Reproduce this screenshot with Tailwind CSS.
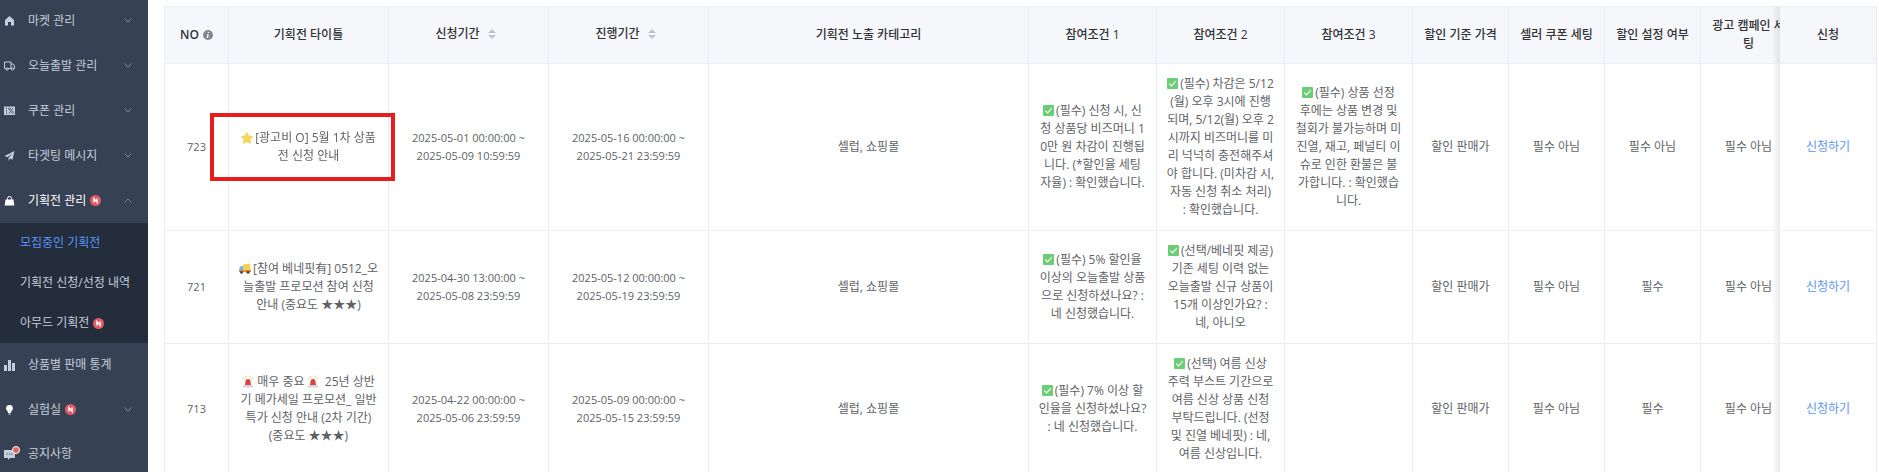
<!DOCTYPE html>
<html lang="ko">
<head>
    <meta charset="UTF-8">
    <meta name="viewport" content="width=device-width, initial-scale=1.0">
    <title>모집중인 기획전</title>
    <script src="https://cdn.jsdelivr.net/npm/@tailwindcss/browser@4"></script>
</head>
<body class="flex h-screen overflow-hidden bg-white font-['Open_Sans','Noto_Sans_CJK_KR',sans-serif] text-[12px] leading-[18px] text-[#606266]">

    <!-- Shared icons -->
    <svg class="hidden">
        <symbol id="chevron" viewBox="0 0 8 5"><path d="M.5 .5 4 4 7.5 .5" fill="none" stroke="#7d8898" stroke-width="1"/></symbol>
        <symbol id="new" viewBox="0 0 11 11"><circle cx="5.5" cy="5.5" r="5.5" fill="#e25a64"/><path d="M3.9 7.6V3.6L7.1 7.4V3.4" fill="none" stroke="#fff" stroke-width="1.4"/></symbol>
        <symbol id="check" viewBox="0 0 11 11"><rect width="11" height="11" rx="1" fill="#6bce76"/><path d="M2.4 5.6 4.6 7.8 8.8 3.2" fill="none" stroke="#fff" stroke-width="1.2"/></symbol>
        <symbol id="siren" viewBox="0 0 12 12"><path d="M1 1.500 2.600 3.500M11 1.500 9.400 3.500M3.500 0 4.300 2M8.500 0 7.700 2" stroke="#f0c75a" stroke-width=".9"/><path d="M3 9 3.500 5.500a2.500 2.500 0 0 1 5 0L9 9z" fill="#dc4440"/><path d="M1.500 9H10.500L11 11.500H1z" fill="#d3d6db"/></symbol>
        <symbol id="sort" viewBox="0 0 8 10"><path d="M4 0 8 4H0zM4 10 0 6H8z" fill="#c0c4cc"/></symbol>
    </svg>

    <!-- Sidebar -->
    <nav class="w-[148px] shrink-0 overflow-hidden bg-[#364153] text-[#c5cedb]">
        <ul class="-mt-0.5">
            <li>
                <button type="button" class="flex h-[45px] w-full items-center pr-4 pl-1">
                    <svg class="mr-[13px] size-[11px]" viewBox="0 0 11 11"><path d="M5.500 1 10 5V10.500H7V7H4v3.500H1V5z" fill="currentColor"/></svg>
                    마켓 관리
                    <svg class="ml-auto h-[5px] w-2"><use href="#chevron"/></svg>
                </button>
            </li>
            <li>
                <button type="button" class="flex h-[45px] w-full items-center pr-4 pl-1">
                    <svg class="mr-[13px] size-[11px]" viewBox="0 0 11 11" fill="none" stroke="currentColor" stroke-width="1"><path d="M.5 2H7V8.500H.5zM7 4H9.300L10.500 6V8.500H7"/><circle cx="3" cy="9" r="1.200" fill="#364153"/><circle cx="8.500" cy="9" r="1.200" fill="#364153"/></svg>
                    오늘출발 관리
                    <svg class="ml-auto h-[5px] w-2"><use href="#chevron"/></svg>
                </button>
            </li>
            <li>
                <button type="button" class="flex h-[45px] w-full items-center pr-4 pl-1">
                    <svg class="mr-[13px] size-[11px]" viewBox="0 0 11 11"><path d="M0 1.500H11V10H0z" fill="currentColor"/><path d="M2.500 2.500V4M2.500 5V6.500M2.500 7.500V9M5 8.500 9 3" stroke="#364153" stroke-width=".9"/><circle cx="5.500" cy="4" r="1" fill="none" stroke="#364153" stroke-width=".7"/><circle cx="8.700" cy="7.500" r="1" fill="none" stroke="#364153" stroke-width=".7"/></svg>
                    쿠폰 관리
                    <svg class="ml-auto h-[5px] w-2"><use href="#chevron"/></svg>
                </button>
            </li>
            <li>
                <button type="button" class="flex h-[45px] w-full items-center pr-4 pl-1">
                    <svg class="mr-[13px] size-[11px]" viewBox="0 0 11 11"><path d="M10.500 1 .5 6 3.300 7.300 8.500 3.300 4.500 7.800V10.800L6 8.600 8.500 9.700z" fill="currentColor"/></svg>
                    타겟팅 메시지
                    <svg class="ml-auto h-[5px] w-2"><use href="#chevron"/></svg>
                </button>
            </li>
            <li>
                <button type="button" class="flex h-[45px] w-full items-center pr-4 pl-1 text-white">
                    <svg class="mr-[13px] size-[11px]" viewBox="0 0 11 11"><path d="M1.500 4.500H9.500L10.300 10.500H.7z" fill="currentColor"/><path d="M3.500 5.500V3.500a2 2 0 0 1 4 0V5.500" fill="none" stroke="currentColor" stroke-width="1"/></svg>
                    기획전 관리
                    <svg class="ml-1 size-[11px]"><use href="#new"/></svg>
                    <svg class="ml-auto h-[5px] w-2 rotate-180"><use href="#chevron"/></svg>
                </button>
                <ul class="bg-[#242d3c]">
                    <li><a href="#" class="flex h-10 items-center pl-5 text-[#5b95f9]">모집중인 기획전</a></li>
                    <li><a href="#" class="flex h-10 items-center pl-5 whitespace-nowrap">기획전 신청/선정 내역</a></li>
                    <li><a href="#" class="flex h-10 items-center pl-5">아무드 기획전<svg class="ml-1 size-[11px]"><use href="#new"/></svg></a></li>
                </ul>
            </li>
            <li>
                <a href="#" class="flex h-11 items-center pr-4 pl-1">
                    <svg class="mr-[13px] size-[11px]" viewBox="0 0 11 11"><path d="M0 5H3V11H0zM4 0H7V11H4zM8 3H11V11H8z" fill="currentColor"/></svg>
                    상품별 판매 통계
                </a>
            </li>
            <li>
                <button type="button" class="flex h-[45px] w-full items-center pr-4 pl-1">
                    <svg class="mr-[13px] size-[11px]" viewBox="0 0 11 11"><path d="M5.500 1a3.400 3.400 0 0 1 3.400 3.400C8.900 6.500 7 7 6.800 9H4.200C4 7 2.100 6.500 2.100 4.400A3.400 3.400 0 0 1 5.500 1zM4.500 9.500H6.500V10.500H4.500z" fill="#fff"/></svg>
                    실험실
                    <svg class="ml-1 size-[11px]"><use href="#new"/></svg>
                    <svg class="ml-auto h-[5px] w-2"><use href="#chevron"/></svg>
                </button>
            </li>
            <li>
                <a href="#" class="flex h-11 items-center pr-4 pl-1">
                    <svg class="mr-[13px] size-[11px] overflow-visible" viewBox="0 0 11 11"><path d="M0 1H11V9H6L4.500 11 4 9H0z" fill="currentColor"/><path d="M2.500 5H3.700M5 5H6.200M7.500 5H8.700" stroke="#364153" stroke-width="1.200"/><circle cx="12" cy="1" r="3.500" fill="#e0645f" stroke="#fff" stroke-width="1"/></svg>
                    공지사항
                </a>
            </li>
        </ul>
    </nav>

    <!-- Promotion list -->
    <main class="min-w-0 flex-1 pt-1.5 pr-0.5 pl-4">
        <div class="overflow-x-hidden border-x border-t border-[#ebeef5]">
            <table class="w-full min-w-[1728px] table-fixed border-separate border-spacing-0 text-center whitespace-nowrap [&_td]:border-r [&_td]:border-b [&_td]:border-[#ebeef5] [&_td]:py-[11px] [&_th]:border-r [&_th]:border-b [&_th]:border-[#ebeef5] [&_th]:bg-[#f5f7fb]">
                <colgroup>
                    <col class="w-16">
                    <col class="w-40">
                    <col class="w-40">
                    <col class="w-40">
                    <col>
                    <col class="w-32">
                    <col class="w-32">
                    <col class="w-32">
                    <col class="w-24">
                    <col class="w-24">
                    <col class="w-24">
                    <col class="w-24">
                    <col class="w-24">
                </colgroup>
                <thead class="text-[#303133]">
                    <tr>
                        <th class="py-2.5 font-medium">
                            <span class="flex items-center justify-center gap-1 font-semibold">NO
                                <svg class="size-[10px]" viewBox="0 0 10 10"><circle cx="5" cy="5" r="5" fill="#85888e"/><path d="M5.500 2 5.300 3M5 4.200 4.500 8" stroke="#fff" stroke-width="1.300"/></svg>
                            </span>
                        </th>
                        <th class="py-2.5 font-medium">기획전 타이틀</th>
                        <th class="pr-1.5 pb-0.5 font-medium"><span class="flex items-center justify-center gap-2">신청기간 <svg class="h-2.5 w-2"><use href="#sort"/></svg></span></th>
                        <th class="pr-1.5 pb-0.5 font-medium"><span class="flex items-center justify-center gap-2">진행기간 <svg class="h-2.5 w-2"><use href="#sort"/></svg></span></th>
                        <th class="py-2.5 font-medium">기획전 노출 카테고리</th>
                        <th class="py-2.5 font-medium">참여조건 1</th>
                        <th class="py-2.5 font-medium">참여조건 2</th>
                        <th class="py-2.5 font-medium">참여조건 3</th>
                        <th class="py-2.5 font-medium">할인 기준 가격</th>
                        <th class="py-2.5 font-medium">셀러 쿠폰 세팅</th>
                        <th class="py-2.5 font-medium">할인 설정 여부</th>
                        <th class="py-2.5 font-medium">광고 캠페인 세<br>팅</th>
                        <th class="sticky right-0 border-r-0! py-2.5 font-medium before:absolute before:inset-y-0 before:right-full before:w-2 before:bg-linear-to-l before:from-black/8 before:to-transparent">신청</th>
                    </tr>
                </thead>
                <tbody>
                    <tr>
                        <td class="text-[11px]">723</td>
                        <td class="relative">
                            <svg class="mr-0.5 inline size-3 align-[-2px]" viewBox="0 0 11 11"><path d="M5.500 .3 7.200 3.500 10.900 4.200 8.300 6.900 8.800 10.600 5.500 9 2.200 10.600 2.700 6.900 .1 4.200 3.800 3.500z" fill="#f3d65c" stroke="#f3d65c" stroke-width=".6" stroke-linejoin="round"/></svg>[광고비 O] 5월 1차 상품<br>전 신청 안내
                            <!-- Highlight frame -->
                            <div class="absolute top-[49px] -left-[19px] z-10 h-[68px] w-[185px] border-4 border-[#e81c1c]"></div>
                        </td>
                        <td class="text-[11px]">2025-05-01 00:00:00 ~<br>2025-05-09 10:59:59</td>
                        <td class="text-[11px]">2025-05-16 00:00:00 ~<br>2025-05-21 23:59:59</td>
                        <td>셀럽, 쇼핑몰</td>
                        <td><svg class="mr-0.5 inline size-[11px] align-[-1px]"><use href="#check"/></svg>(필수) 신청 시, 신<br>청 상품당 비즈머니 1<br>0만 원 차감이 진행됩<br>니다. (*할인율 세팅<br>자율) : 확인했습니다.</td>
                        <td><svg class="mr-0.5 inline size-[11px] align-[-1px]"><use href="#check"/></svg>(필수) 차감은 5/12<br>(월) 오후 3시에 진행<br>되며, 5/12(월) 오후 2<br>시까지 비즈머니를 미<br>리 넉넉히 충전해주셔<br>야 합니다. (미차감 시,<br>자동 신청 취소 처리)<br>: 확인했습니다.</td>
                        <td><svg class="mr-0.5 inline size-[11px] align-[-1px]"><use href="#check"/></svg>(필수) 상품 선정<br>후에는 상품 변경 및<br>철회가 불가능하며 미<br>진열, 재고, 페널티 이<br>슈로 인한 환불은 불<br>가합니다. : 확인했습<br>니다.</td>
                        <td>할인 판매가</td>
                        <td>필수 아님</td>
                        <td>필수 아님</td>
                        <td>필수 아님</td>
                        <td class="sticky right-0 border-r-0! bg-white before:absolute before:inset-y-0 before:right-full before:w-2 before:bg-linear-to-l before:from-black/8 before:to-transparent"><a href="#" class="text-[#5b95f9]">신청하기</a></td>
                    </tr>
                    <tr>
                        <td class="text-[11px]">721</td>
                        <td>
                            <svg class="mr-0.5 inline h-[11px] w-3 align-[-1px]" viewBox="0 0 12 11"><path d="M4 1.500 11 .5 11.800 7H4z" fill="#f3cf55"/><path d="M0 7 1 3.500 4 3V8H0z" fill="#6fb4e8"/><path d="M0 7H12V9H0z" fill="#e8893a"/><circle cx="2.500" cy="9.300" r="1.500" fill="#4b4b52"/><circle cx="9" cy="9.300" r="1.500" fill="#4b4b52"/></svg>[참여 베네핏有] 0512_오<br>늘출발 프로모션 참여 신청<br>안내 (중요도 ★★★)
                        </td>
                        <td class="text-[11px]">2025-04-30 13:00:00 ~<br>2025-05-08 23:59:59</td>
                        <td class="text-[11px]">2025-05-12 00:00:00 ~<br>2025-05-19 23:59:59</td>
                        <td>셀럽, 쇼핑몰</td>
                        <td><svg class="mr-0.5 inline size-[11px] align-[-1px]"><use href="#check"/></svg>(필수) 5% 할인율<br>이상의 오늘출발 상품<br>으로 신청하셨나요? :<br>네 신청했습니다.</td>
                        <td><svg class="mr-0.5 inline size-[11px] align-[-1px]"><use href="#check"/></svg>(선택/베네핏 제공)<br>기존 세팅 이력 없는<br>오늘출발 신규 상품이<br>15개 이상인가요? :<br>네, 아니오</td>
                        <td></td>
                        <td>할인 판매가</td>
                        <td>필수 아님</td>
                        <td>필수</td>
                        <td>필수 아님</td>
                        <td class="sticky right-0 border-r-0! bg-white before:absolute before:inset-y-0 before:right-full before:w-2 before:bg-linear-to-l before:from-black/8 before:to-transparent"><a href="#" class="text-[#5b95f9]">신청하기</a></td>
                    </tr>
                    <tr>
                        <td class="text-[11px]">713</td>
                        <td>
                            <svg class="inline size-3 align-[-2px]"><use href="#siren"/></svg> 매우 중요<svg class="ml-0.5 inline size-3 align-[-2px]"><use href="#siren"/></svg>&nbsp; 25년 상반<br>기 메가세일 프로모션_ 일반<br>특가 신청 안내 (2차 기간)<br>(중요도 ★★★)
                        </td>
                        <td class="text-[11px]">2025-04-22 00:00:00 ~<br>2025-05-06 23:59:59</td>
                        <td class="text-[11px]">2025-05-09 00:00:00 ~<br>2025-05-15 23:59:59</td>
                        <td>셀럽, 쇼핑몰</td>
                        <td><svg class="mr-0.5 inline size-[11px] align-[-1px]"><use href="#check"/></svg>(필수) 7% 이상 할<br>인율을 신청하셨나요?<br>: 네 신청했습니다.</td>
                        <td><svg class="mr-0.5 inline size-[11px] align-[-1px]"><use href="#check"/></svg>(선택) 여름 신상<br>주력 부스트 기간으로<br>여름 신상 상품 신청<br>부탁드립니다. (선정<br>및 진열 베네핏) : 네,<br>여름 신상입니다.</td>
                        <td></td>
                        <td>할인 판매가</td>
                        <td>필수 아님</td>
                        <td>필수</td>
                        <td>필수 아님</td>
                        <td class="sticky right-0 border-r-0! bg-white before:absolute before:inset-y-0 before:right-full before:w-2 before:bg-linear-to-l before:from-black/8 before:to-transparent"><a href="#" class="text-[#5b95f9]">신청하기</a></td>
                    </tr>
                </tbody>
            </table>
        </div>
    </main>

</body>
</html>
